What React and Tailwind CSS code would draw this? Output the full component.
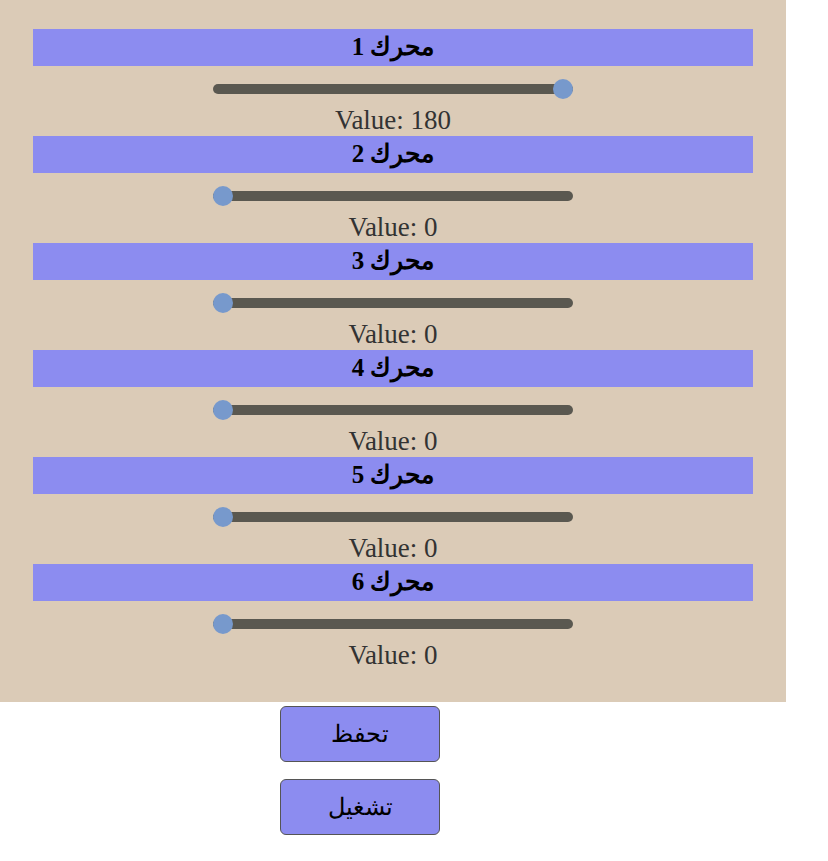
import React, { useState } from 'react';

const MotorSlider = ({ value }) => {
  const pct = value / 180;
  return (
    <div className="relative mx-auto mt-[13px] h-[20px] w-[360px]">
      <div className="absolute left-0 right-0 top-[5px] h-[10px] rounded-[5px] bg-[#5a5850]" />
      <div
        className="absolute top-0 h-[20px] w-[20px] rounded-full bg-[#7799cc]"
        style={{ left: `${pct * 340}px` }}
      />
    </div>
  );
};

const Motor = ({ n, value }) => (
  <div>
    <div
      dir="rtl"
      className="h-[37px] bg-[#8c8cf0] text-center text-[25px] font-bold leading-[35px] text-black"
    >
      محرك {n}
    </div>
    <MotorSlider value={value} />
    <div className="mt-[7px] h-[30px] text-center text-[27px] leading-[28px] text-[#333333]">
      Value: {value}
    </div>
  </div>
);

export default function App() {
  const [values] = useState([180, 0, 0, 0, 0, 0]);

  return (
    <div className="min-h-[861px] bg-white font-['Liberation_Serif',serif]">
      <div className="w-[786px] bg-[#dbcbb7] px-[33px] pt-[29px] pb-[31px]">
        {values.map((v, i) => (
          <Motor key={i} n={i + 1} value={v} />
        ))}
      </div>
      <div className="ml-[280px] mt-[4px] flex flex-col gap-[17px]">
        <button className="h-[56px] w-[160px] rounded-[6px] border border-[#555555] bg-[#8c8cf0] text-[24px] text-black">
          تحفظ
        </button>
        <button className="h-[56px] w-[160px] rounded-[6px] border border-[#555555] bg-[#8c8cf0] text-[24px] text-black">
          تشغيل
        </button>
      </div>
    </div>
  );
}
